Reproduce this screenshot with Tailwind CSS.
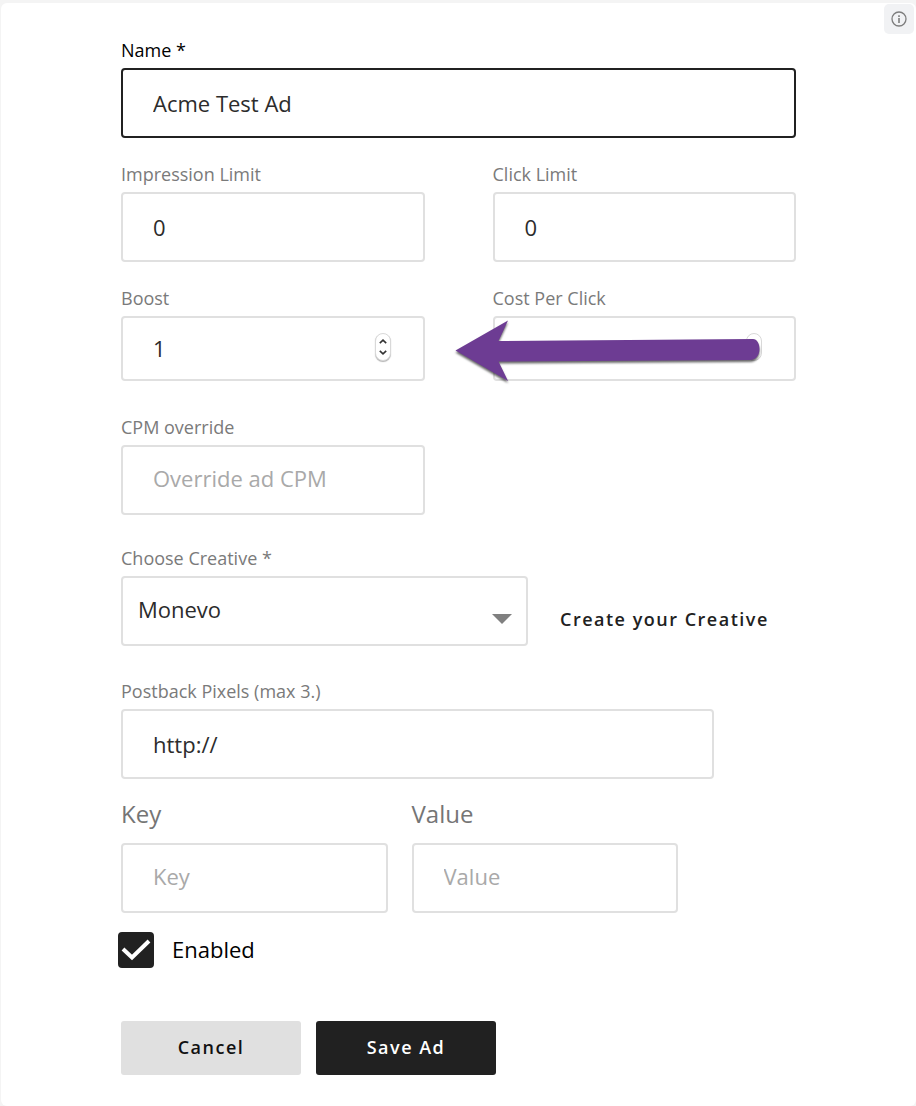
<!DOCTYPE html>
<html lang="en">
<head>
  <meta charset="UTF-8" />
  <meta name="viewport" content="width=device-width, initial-scale=1.0"/>
  <title>Edit Ad</title>
  <script src="https://cdn.jsdelivr.net/npm/@tailwindcss/browser@4"></script>
</head>
<body class="flex min-h-screen bg-[#f4f4f4] pt-[3px] pl-px font-['Open_Sans',sans-serif]">

  <main class="relative flex-1 rounded-md bg-white px-[120px] pt-[35px] pb-[31px]">
    <button type="button" aria-label="Info" class="absolute top-px right-[2px] flex size-[30px] items-center justify-center rounded-[5px] bg-[#f1f2f4] text-[#7d7d7d]">
      <svg class="size-4" viewBox="0 0 16 16" fill="none" stroke="currentColor">
        <circle cx="8" cy="8" r="7" stroke-width="1.3"/>
        <path d="M8 7v5M8 4.2v1.8" stroke-width="1.6"/>
      </svg>
    </button>

    <form id="adForm" class="text-[22px] text-[#2c2c2c]">
      <div>
        <label for="name" class="mb-[6px] block text-lg leading-6 text-black">Name *</label>
        <input type="text" id="name" value="Acme Test Ad" required class="h-[70px] w-full rounded-[4px] border-2 border-[#212121] px-[30px] outline-none" />
      </div>

      <div class="mt-6 grid grid-cols-2 gap-x-[68px] gap-y-6">
        <div>
          <label for="impressions" class="mb-[6px] block text-lg leading-6 text-[#7a7a7a]">Impression Limit</label>
          <input type="text" id="impressions" value="0" class="h-[70px] w-full rounded-[4px] border-2 border-[#e0e0e0] px-[30px] outline-none" />
        </div>
        <div>
          <label for="clicks" class="mb-[6px] block text-lg leading-6 text-[#7a7a7a]">Click Limit</label>
          <input type="text" id="clicks" value="0" class="h-[70px] w-full rounded-[4px] border-2 border-[#e0e0e0] px-[30px] outline-none" />
        </div>
        <div>
          <label for="boost" class="mb-[6px] block text-lg leading-6 text-[#7a7a7a]">Boost</label>
          <div class="relative">
            <input type="number" id="boost" value="1" class="h-[65px] w-full appearance-none rounded-[4px] border-2 border-[#e0e0e0] px-[30px] pb-[2px] outline-none [-moz-appearance:textfield] [&::-webkit-inner-spin-button]:appearance-none" />
            <div class="absolute top-[17px] right-[34px] flex h-7 w-4 flex-col rounded-full border border-[#d9d9d9] bg-white text-[#333] shadow-[0_1px_1px_rgba(0,0,0,0.3)]">
              <button type="button" data-target="boost" data-step="1" aria-label="Increase boost" class="flex flex-1 items-end justify-center pb-[3px]">
                <svg class="h-[5px] w-2" viewBox="0 0 8 5" fill="none" stroke="currentColor" stroke-width="1.6"><path d="M.8 4.2 4 1.2l3.200 3"/></svg>
              </button>
              <button type="button" data-target="boost" data-step="-1" aria-label="Decrease boost" class="flex flex-1 items-start justify-center pt-[3px]">
                <svg class="h-[5px] w-2" viewBox="0 0 8 5" fill="none" stroke="currentColor" stroke-width="1.6"><path d="M.8.8 4 3.800l3.200-3"/></svg>
              </button>
            </div>
          </div>
        </div>
        <div>
          <label for="cpc" class="mb-[6px] block text-lg leading-6 text-[#7a7a7a]">Cost Per Click</label>
          <div class="relative">
            <input type="number" id="cpc" class="h-[65px] w-full appearance-none rounded-[4px] border-2 border-[#e0e0e0] px-[30px] pb-[2px] outline-none [-moz-appearance:textfield] [&::-webkit-inner-spin-button]:appearance-none" />
            <div class="absolute top-[17px] right-[34px] h-7 w-4 rounded-full border border-[#d9d9d9] bg-white"></div>
            <!-- callout arrow pointing at Boost -->
            <svg class="pointer-events-none absolute top-0 left-[-43px] h-[72px] w-[320px] drop-shadow-[0_2px_1px_rgba(0,0,0,0.6)]" viewBox="0 0 320 72" fill="#6d3c93">
              <path d="M5.500 34.500 58 4.500 48.500 25 303 23c4 0 6.500 4.500 6.500 10s-3 11-9.500 11L48.500 45.500 58 65Z"/>
            </svg>
          </div>
        </div>
      </div>

      <div class="mt-[34px] grid grid-cols-2 gap-x-[68px]">
        <div>
          <label for="cpm" class="mb-[6px] block text-lg leading-6 text-[#7a7a7a]">CPM override</label>
          <input type="text" id="cpm" placeholder="Override ad CPM" class="h-[70px] w-full rounded-[4px] border-2 border-[#e0e0e0] px-[30px] pb-1 outline-none placeholder:text-[#a9a9a9]" />
        </div>
      </div>

      <div class="mt-[31px]">
        <label for="creative" class="mb-[6px] block text-lg leading-6 text-[#7a7a7a]">Choose Creative *</label>
        <div class="flex items-center gap-8">
          <div class="relative w-full max-w-[407px]">
            <select id="creative" class="h-[70px] w-full appearance-none rounded-[4px] border-2 border-[#e0e0e0] pr-12 pb-1 pl-[15px] outline-none">
              <option>Monevo</option>
            </select>
            <svg class="pointer-events-none absolute top-[38px] right-4 h-[10px] w-5" viewBox="0 0 20 10" fill="#808080"><path d="M0 0h20L10 10Z"/></svg>
          </div>
          <a href="#" class="pt-4 text-lg leading-6 font-semibold tracking-[1.5px] whitespace-nowrap text-[#212121]">Create your Creative</a>
        </div>
      </div>

      <div class="mt-[33px] max-w-[593px]">
        <label for="postback" class="mb-[6px] block text-lg leading-6 text-[#7a7a7a]">Postback Pixels (max 3.)</label>
        <input type="text" id="postback" value="http://" class="h-[70px] w-full rounded-[4px] border-2 border-[#e0e0e0] px-[30px] outline-none" />
      </div>

      <div class="mt-[19px] grid max-w-[557px] grid-cols-2 gap-x-6">
        <div>
          <label for="key" class="mb-[13px] block text-2xl text-[#757575]">Key</label>
          <input type="text" id="key" placeholder="Key" class="h-[70px] w-full rounded-[4px] border-2 border-[#e0e0e0] px-[30px] pb-1 outline-none placeholder:text-[#a9a9a9]" />
        </div>
        <div>
          <label for="value" class="mb-[13px] block text-2xl text-[#757575]">Value</label>
          <input type="text" id="value" placeholder="Value" class="h-[70px] w-full rounded-[4px] border-2 border-[#e0e0e0] px-[30px] pb-1 outline-none placeholder:text-[#a9a9a9]" />
        </div>
      </div>

      <label for="enabled" class="mt-[19px] -ml-[3px] flex items-center gap-[18px] text-black">
        <span class="relative size-9">
          <input type="checkbox" id="enabled" checked class="peer block size-9 appearance-none rounded-[4px] border-2 border-[#212121] checked:bg-[#212121]" />
          <svg class="pointer-events-none absolute inset-0 hidden size-9 peer-checked:block" viewBox="0 0 36 36" fill="none" stroke="#fff" stroke-width="4"><path d="M5 17l9 8.500L31 9"/></svg>
        </span>
        <span class="pb-[2px]">Enabled</span>
      </label>

      <div class="mt-[53px] flex gap-[15px] text-lg font-semibold tracking-[1.5px]">
        <button type="reset" class="h-[54px] w-[180px] rounded-[3px] bg-[#e0e0e0] pb-[2px] text-[#111] hover:bg-[#d5d5d5]">Cancel</button>
        <button type="submit" class="h-[54px] w-[180px] rounded-[3px] bg-[#212121] pb-[2px] text-white hover:bg-black">Save Ad</button>
      </div>
    </form>
  </main>

  <script>
    document.querySelectorAll('[data-step]').forEach(function(btn) {
      btn.addEventListener('click', function() {
        const input = document.getElementById(btn.dataset.target);
        input.value = Number(input.value) + Number(btn.dataset.step);
      });
    });

    document.getElementById('adForm').addEventListener('submit', function(e) {
      e.preventDefault();
    });
  </script>
</body>
</html>
